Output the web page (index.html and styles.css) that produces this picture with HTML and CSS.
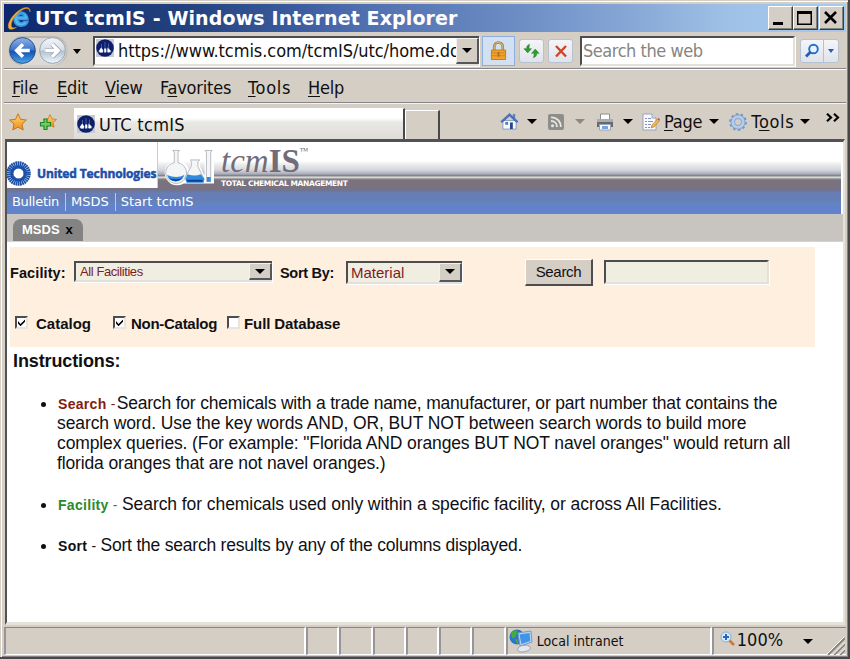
FILE: index.html
```html
<!DOCTYPE html>
<html lang="en">
<head>
<meta charset="utf-8">
<title>UTC tcmIS - Windows Internet Explorer</title>
<link rel="stylesheet" href="styles.css">
</head>
<body>
<svg width="0" height="0" class="defs">
  <defs>
    <linearGradient id="blueBall" x1="0" y1="0" x2="0" y2="1"><stop offset="0" stop-color="#8fb4e6"/><stop offset=".48" stop-color="#3c74cb"/><stop offset=".52" stop-color="#1450b0"/><stop offset="1" stop-color="#48a8f0"/></linearGradient>
    <linearGradient id="greyBall" x1="0" y1="0" x2="0" y2="1"><stop offset="0" stop-color="#f2f6fa"/><stop offset=".48" stop-color="#d5dde6"/><stop offset=".52" stop-color="#b4c1cf"/><stop offset="1" stop-color="#eef8ff"/></linearGradient>
    <linearGradient id="gold" x1="0" y1="0" x2="0" y2="1"><stop offset="0" stop-color="#ffd977"/><stop offset="1" stop-color="#ee8a14"/></linearGradient>
    <symbol id="favicon" viewBox="0 0 18 18"><rect width="18" height="18" fill="#c9cbd3"/><circle cx="9" cy="9" r="8.800" fill="#0c1f6c"/><path d="M5.500 5v4L2.600 13.200h4.200L9 9.500l2.400 3.700h3.800L12.500 9V4.500M9 3v6.500" fill="none" stroke="#5d6b9e" stroke-width=".8"/><path d="M5.200 8.500 2.800 12l1.400 1.400h2.600L7 11zM8.200 9.500h2v4h-2zM11.500 8.500l-.2 4.500 1.700.4 2-1.400z" fill="#fff"/></symbol>
    <symbol id="star" viewBox="0 0 18 18"><path d="M9 .8 11.500 6.300 17.400 7 13 11l1.200 6L9 14.100 3.800 17 5 11 .6 7l5.900-.7z" fill="url(#gold)" stroke="#c5761a"/></symbol>
  </defs>
</svg>
<div class="window">
  <header class="titlebar">
    <svg class="ie" viewBox="0 0 25 25"><path d="M21 14H11c0 3 4 4.500 6 2h4c-2 6-13 7-14-2C6.500 5 20 3 21 14zM11 11h6c-.5-3.500-5.500-3.500-6 0z" fill="#55b9f2" stroke="#3a97e0" stroke-width="1.600"/><path d="M23 6.500C24 1 18 0 10.500 6 3 12-1 21 2.500 23.500c2 1 5-.5 7-1.800-4 1.500-6 .3-5-4C6 11 14 3.500 19.500 3c2 0 3 1 3.500 3.500z" fill="#f5b030" stroke="#c98a28" stroke-width=".5"/></svg>
    <h1 class="title"><span class="t">UTC tcmIS - Windows Internet Explorer</span></h1>
    <div class="controls">
      <span class="ctl"><svg viewBox="0 0 22 20"><path d="M4 15h10v3H4z"/></svg></span>
      <span class="ctl"><svg viewBox="0 0 22 20"><path d="M3 4h15v14H3zM4.500 7v9.500h12V7z" fill-rule="evenodd"/></svg></span>
      <span class="ctl close"><svg viewBox="0 0 22 20"><path d="m5 5 11 11M16 5 5 16" stroke="#000" stroke-width="2.600"/></svg></span>
    </div>
  </header>

  <div class="navrow">
    <svg class="history" viewBox="0 0 62 32"><path d="M15 1h32c8 0 15 6 15 15s-7 15-15 15H15C7 31 1 24 1 16S7 1 15 1z" fill="#bbb7b0"/><path d="M15 3h32c7 0 14 5 14 13s-7 15-14 15H15z" fill="#dcdad5"/><circle cx="15.500" cy="16" r="13.300" fill="url(#blueBall)" stroke="#2b4f86"/><circle cx="46.500" cy="16" r="13.300" fill="url(#greyBall)" stroke="#96a3b2"/><path d="M23 16H10m6-6.500L9.500 16l6.500 6.500" fill="none" stroke="#fff" stroke-width="3.600"/><path d="M39 16h13m-6-6.500 6.500 6.500-6.500 6.500" fill="none" stroke="#8e9aa6" stroke-width="4.800"/><path d="M39 16h13m-6-6.500 6.500 6.500-6.500 6.500" fill="none" stroke="#fff" stroke-width="3.400"/></svg>
    <i class="arrow hist"></i>
    <div class="field address"><svg class="fav"><use href="#favicon"/></svg><span class="url"><span class="t">https://www.tcmis.com/tcmIS/utc/home.do</span></span><span class="drop"><i class="arrow"></i></span></div>
    <div class="lock"><svg viewBox="0 0 18 20"><path d="M4.500 10V5.500a4.500 4.500 0 0 1 9 0V10" fill="none" stroke="#9c7c45" stroke-width="2.800"/><path d="M4.500 10V5.500a4.500 4.500 0 0 1 9 0V10" fill="none" stroke="#e8c98a"/><path d="M1.500 9h15v10h-15z" fill="#f0a22c" stroke="#c77a1c"/><path d="M2 12h14M2 15h14" stroke="#cf8624"/><path d="M8 11h2v5H8z" fill="#b86a10"/></svg></div>
    <div class="btn refresh"><svg viewBox="0 0 18 16"><path d="M7 1C4.500 1.500 3.800 3 3.800 5.500H1L5 10l4-4.500H6.400C6.400 4 6.500 2.500 7 1zM11 15c2.500-.5 3.600-2 3.600-4.500H17L13 6 9 10.500h2.800c0 2-.2 3-.8 4.500z" fill="#2f9c2f" stroke="#1d7a20" stroke-width=".5"/></svg></div>
    <div class="btn stop"><svg viewBox="0 0 14 14"><path d="m2 2 10 10.500M12 2 2 12.500" stroke="#cf4526" stroke-width="2.400"/></svg></div>
    <div class="field searchbox"><span class="t">Search the web</span></div>
    <div class="btn find"><svg viewBox="0 0 16 16"><circle cx="9.500" cy="6" r="4.300" fill="#e9f4ff" stroke="#1e6fd0" stroke-width="1.900"/><path d="M6.500 9 2 13.500" stroke="#1e5fb8" stroke-width="2.800"/></svg><span><i class="arrow"></i></span></div>
  </div>

  <nav class="menubar">
    <span class="t"><u>F</u>ile</span><span class="t"><u>E</u>dit</span><span class="t"><u>V</u>iew</span><span class="t">F<u>a</u>vorites</span><span class="t wide"><u>T</u>ools</span><span class="t"><u>H</u>elp</span>
  </nav>

  <div class="tabrow">
    <svg class="star1"><use href="#star"/></svg>
    <svg class="star2" viewBox="0 0 18 18"><use href="#star" x="4" width="14" height="16"/><path d="M5 6h3v3.500h3.500V13H8v3.500H5V13H1.500V9.500H5z" fill="#6fce63" stroke="#1f8a22" stroke-width="1.200"/></svg>
    <div class="tab"><svg class="fav"><use href="#favicon"/></svg><span class="t">UTC tcmIS</span></div>
    <div class="newtab"></div>
    <div class="commands">
      <svg class="home" viewBox="0 0 20 20"><path d="M3 9h14v9H3z" fill="#f5f8fc" stroke="#8c9bb8"/><path d="M13.500 2h2.500v5h-2.500z" fill="#6484c0"/><path d="M.8 10 10 1.500 19 10l-1.500 1L10 4.300 2.200 11z" fill="#4a74c4" stroke="#2f549c" stroke-width=".6"/><path d="M10.500 11h3v7h-3z" fill="#24488f"/><path d="M5.500 10.500h3v3h-3z" fill="#5d7fae"/></svg>
      <i class="arrow a1"></i>
      <svg class="rss" viewBox="0 0 16 16"><rect width="16" height="16" rx="2" fill="#8d8d89"/><circle cx="4.500" cy="11.700" r="1.500" fill="#e8e6e1"/><path d="M3 7c3.500 0 6 2.500 6 6M3 3.300c6 0 9.800 4 9.800 9.700" fill="none" stroke="#e8e6e1" stroke-width="1.800"/></svg>
      <i class="arrow grey a2"></i>
      <svg class="printer" viewBox="0 0 18 18"><path d="M4.500 1h9v6h-9z" fill="#fff" stroke="#8c8c8c"/><path d="M1 6h16v8H1z" fill="#666a70"/><path d="M1 6h16v3H1z" fill="#a9adb3"/><path d="M3.500 11.500h11V17h-11z" fill="#f6f8ff" stroke="#9ba5b5"/><path d="M6 13h6v3H6z" fill="#78a3dd"/></svg>
      <i class="arrow a3"></i>
      <svg class="page" viewBox="0 0 18 18"><path d="M1 1h9l4 4v12H1z" fill="#f8faff" stroke="#9aa3b4"/><path d="M10 1v4h4" fill="#dde4ef" stroke="#9aa3b4"/><path d="M3 5.500h2m1 0h3M3 8.500h2m1 0h5M3 11.500h2m1 0h3M3 14.500h2m1 0h2" stroke="#8492b8"/><path d="m9 15 1-3 5.500-6 2 1.700L12 14z" fill="#f2b84c" stroke="#ad7533" stroke-width=".6"/><path d="m15.500 6 1-1 1.500 1.500-.8 1z" fill="#d34040"/></svg>
      <span class="t cmdPage"><u>P</u>age</span>
      <i class="arrow a4"></i>
      <svg class="gear" viewBox="0 0 18 18"><circle cx="9" cy="9" r="7.600" fill="none" stroke="#7898c4" stroke-width="2.600" stroke-dasharray="2.400 2.375"/><circle cx="9" cy="9" r="5.200" fill="none" stroke="#7898c4" stroke-width="4.400"/><circle cx="9" cy="9" r="5.200" fill="none" stroke="#b4cdec" stroke-width="3"/></svg>
      <span class="t wide cmdTools">T<u>o</u>ols</span>
      <i class="arrow a5"></i>
      <svg class="more" viewBox="0 0 14 9"><path d="m1 .8 4 3.700-4 3.700M8 .8l4 3.700-4 3.700" fill="none" stroke="#000" stroke-width="2.200"/></svg>
    </div>
  </div>

  <main class="viewport">
    <div class="banner">
      <div class="utc"><svg viewBox="0 0 26 26"><circle cx="13" cy="13" r="9" fill="none" stroke="#1c4fa8" stroke-width="7.500" stroke-dasharray="1.500 .38"/><circle cx="13" cy="13" r="7" fill="none" stroke="#1c4fa8" stroke-width="3"/></svg><span class="t">United Technologies</span></div>
      <div class="tcm">
        <svg class="flasks" viewBox="0 0 56 42"><g fill="#f7f8fa" stroke="#fff" stroke-width="4"><path d="M13 3h8l-2 2v11a11 11 0 1 1-4 0V5zM31 13h10l-2 2v5l8 16H26l7-16v-5zM47 3h8l-1 2v31h-6V5z"/></g><g fill="#f4f5f7" stroke="#b4b7bd"><path d="M12.500 3h7L18 5v11a11 11 0 1 1-4 0V5zM31 13h10l-2 2v5l6 12-2 4H27l-2-4 7-12v-5zM46.500 3h7.500l-1.500 2v31H48V5z"/></g><path d="M6.500 29q10 4 18 0c-2 9-16 9-18 0zM28 28q8 3 14 0l4 5-1 4H27l-1-4zM48.500 31h4v5h-4z" fill="#2f8bdc"/><path d="M8 32q8 3 15 0-7 7-15 0zM27 34h17v2H28z" fill="#0b3f98"/></svg>
        <div class="brand"><span class="name"><i class="t">tcm</i><b class="t">IS</b><sup>™</sup></span><span class="tagline t">TOTAL CHEMICAL MANAGEMENT</span></div>
      </div>
    </div>
    <nav class="links"><span class="t first">Bulletin</span><span class="t">MSDS</span><span class="t">Start tcmIS</span></nav>
    <div class="pagetabs"><div class="pagetab"><span class="t">MSDS</span><b class="x">x</b></div></div>
    <section class="form">
      <div class="filters">
        <label class="lf"><span class="t">Facility:</span></label>
        <div class="field sel s1"><span class="t">All Facilities</span><span class="drop"><i class="arrow"></i></span></div>
        <label class="ls"><span class="t">Sort By:</span></label>
        <div class="field sel s2"><span class="t">Material</span><span class="drop"><i class="arrow"></i></span></div>
        <div class="go"><span class="t">Search</span></div>
        <div class="field query"></div>
      </div>
      <div class="checks">
        <i class="box on"><svg viewBox="0 0 9 9"><path d="m1 3 2.500 3L8 1.500v2.200L3.500 8.200 1 5.500z"/></svg></i><label class="c1"><span class="t">Catalog</span></label>
        <i class="box on"><svg viewBox="0 0 9 9"><path d="m1 3 2.500 3L8 1.500v2.200L3.500 8.200 1 5.500z"/></svg></i><label class="c2"><span class="t">Non-Catalog</span></label>
        <i class="box"></i><label class="c3"><span class="t">Full Database</span></label>
      </div>
    </section>
    <h2 class="heading"><span class="t">Instructions:</span></h2>
    <ul class="help">
      <li><b class="red t">Search</b><span class="red dash"> -</span><span class="t l1">Search for chemicals with a trade name, manufacturer, or part number that contains the</span><br><span class="t l2">search word. Use the key words AND, OR, BUT NOT between search words to build more</span><br><span class="t l3">complex queries. (For example: "Florida AND oranges BUT NOT navel oranges" would return all</span><br><span class="t l4">florida oranges that are not navel oranges.)</span></li>
      <li><b class="green t">Facility</b><span class="green dash"> - </span><span class="t l5">Search for chemicals used only within a specific facility, or across All Facilities.</span></li>
      <li><b class="t sort">Sort</b><span class="dash"> - </span><span class="t l6">Sort the search results by any of the columns displayed.</span></li>
    </ul>
  </main>

  <footer class="status">
    <div class="cell c0"></div><div class="cell"></div><div class="cell"></div><div class="cell"></div><div class="cell"></div><div class="cell"></div><div class="cell"></div>
    <div class="cell zone"><svg viewBox="0 0 24 24"><circle cx="8" cy="8" r="7.500" fill="#2f74c8"/><path d="M2 4c4-4 7-3 6 0s-2 6-5 5zM6 10c4 0 4 3 2 5z" fill="#3fae3a"/><path d="m9 4 13-2 1 11-12 4z" fill="#b9d3f0" stroke="#7b97bd"/><path d="m10.500 5.500 10-1.500.8 8-9 3z" fill="#3e95ea"/><path d="M9 19c2-3 10-4 12-1s-5 5-8 5-5-1-4-4z" fill="#e4e8ee" stroke="#94a2b5"/></svg><span class="t">Local intranet</span></div>
    <div class="cell zoom"><svg viewBox="0 0 15 15"><path d="m9 9 5 5" stroke="#c77b3a" stroke-width="2.600"/><circle cx="6" cy="6" r="5" fill="#d7ebff" stroke="#8fa9c8"/><path d="M6 3v6M3 6h6" stroke="#2467c4" stroke-width="2"/></svg><span class="t">100%</span><i class="arrow"></i></div>
    <svg class="grip" viewBox="0 0 18 18"><path d="M1 18 18 1M7 18 18 7M13 18l5-5" stroke="#88857f" stroke-width="2"/><path d="M0 17 17 0M5.500 18 18 5.500M11.500 18l6.500-6.500" stroke="#fff"/></svg>
  </footer>
</div>
</body>
</html>
```

FILE: styles.css
```css
* { box-sizing: border-box; }
body { margin: 0; font-family: "DejaVu Sans Condensed", "DejaVu Sans", sans-serif; font-stretch: condensed; color: #101010; overflow: hidden; }
.defs { position: absolute; }
.t { white-space: nowrap; }
u { text-underline-offset: 2px; text-decoration-thickness: 1px; }
svg { display: block; flex: none; }
.window { width: 850px; height: 659px; background: #d5cec5; display: flex; flex-direction: column; padding: 4px 4px 3px; border: solid #47484b; border-width: 0 2px 2px 0; box-shadow: inset 1px 1px #d5cec5, inset 2px 2px #fff, inset -1px -1px #858280; }

.arrow { flex: none; width: 0; height: 0; border: 5px solid transparent; border-top-color: #000; border-bottom: 0; }
.arrow.grey { border-top-color: #8b8883; }

.titlebar { height: 28px; width: 842px; flex: none; display: flex; align-items: center; background: linear-gradient(90deg, #0d286d, #24427f 22%, #3c5c9f 35%, #4f6eae 42%, #6a8bc3 60%, #8aabd8 76%, #9fc1e6 86%, #a6caf0); }
.ie { width: 25px; height: 26px; margin-left: 3px; }
.title { margin: 0 0 0 3px; font: bold 19px/28px "DejaVu Sans", sans-serif; font-stretch: normal; color: #fff; flex: 1; letter-spacing: .12px; }
.controls { display: flex; margin-right: 2px; }
.ctl { width: 25px; height: 24px; background: #d5cec5; border: 1px solid; border-color: #fff #3c3c3c #3c3c3c #fff; box-shadow: inset -1px -1px #85817b; }
.ctl svg { width: 22px; height: 20px; }
.ctl.close { margin-left: 1px; }

.navrow { height: 38px; flex: none; display: flex; align-items: center; border-bottom: 1px solid #fff; box-shadow: inset 0 -1px #85858b; width: 842px; }
.history { width: 61px; height: 31px; margin-left: 3px; }
.arrow.hist { margin: 2px 0 0 5px; border-width: 5px 4.500px 0; }
.field { border: solid; border-width: 2px; border-color: #4b4d50 #e4dfd8 #e4dfd8 #4b4d50; background: #fff; display: flex; align-items: center; box-shadow: 1px 1px #fff; }
.address { margin: 0 0 0 12px; width: 386px; height: 30px; font-size: 18px; border-right: 0; }
.fav { width: 18px; height: 18px; }
.address .fav { margin: -6px 4px 0 1px; }
.url { flex: 1; overflow: hidden; min-width: 0; letter-spacing: -.06px; }
.drop { flex: none; background: #d5cec5; border: solid; border-width: 1px 2px 2px 1px; border-color: #f4f1ec #56575a #56575a #f4f1ec; display: flex; align-items: center; justify-content: center; }
.address .drop { width: 23px; height: 26px; }
.lock { width: 33px; height: 30px; margin-left: 3px; border: 1px solid #8aaede; background: #d3e0f2; display: grid; place-items: center; }
.lock svg { width: 17px; height: 20px; }
.btn { height: 24px; width: 25px; border: 1px solid #b7c2d1; border-radius: 3px; background: linear-gradient(#f4f5f8, #dfe3ea); display: grid; place-items: center; }
.refresh { margin-left: 4px; }
.refresh svg { width: 17px; height: 16px; }
.stop { margin-left: 4px; }
.stop svg { width: 14px; height: 14px; }
.searchbox { margin: 0 0 0 7px; width: 215px; height: 30px; font-size: 18px; letter-spacing: -.45px; color: #85857f; padding-left: 1px; }
.find { margin-left: 5px; width: 39px; display: flex; }
.find svg { width: 16px; height: 16px; margin: 0 3px; }
.find span { border-left: 1px solid #b7c2d1; align-self: stretch; display: flex; align-items: center; flex: 1; justify-content: center; }
.find .arrow { border-width: 4px 3px 0; border-top-color: #1e5fb8; }

.menubar { height: 34px; width: 842px; flex: none; display: grid; grid-template-columns: 45px 48px 55px 88px 60px auto; align-items: center; padding: 2px 0 0 8px; font-size: 18px; letter-spacing: -.2px; border-bottom: 1px solid #f6f2ee; box-shadow: inset 0 -1px #85858b; }
.wide { letter-spacing: .7px; }

.tabrow { height: 35px; flex: none; display: flex; font-size: 18px; }
.star1 { width: 18px; height: 18px; margin: 9px 0 0 5px; }
.star2 { width: 18px; height: 18px; margin: 9px 0 0 12px; }
.tab { width: 331px; margin: 4px 0 0 17px; border-right: 2px solid #47484b; background: linear-gradient(#fff 30%, #e9e8e4 45%, #dedcd6); border-top: 1px solid #fff; display: flex; align-items: center; padding-left: 3px; gap: 4px; letter-spacing: .3px; }
.newtab { width: 35px; margin: 6px 0 0 0; border: 1px solid #fff; border-right: 2px solid #47484b; border-bottom: 0; }
.commands { flex: 1; display: flex; align-items: center; }
.home { width: 19px; height: 19px; margin-left: 60px; }
.a1 { margin-left: 8px; }
.rss { width: 16px; height: 16px; margin-left: 11px; }
.a2 { margin-left: 11px; }
.printer { width: 18px; height: 18px; margin-left: 11px; }
.a3 { margin-left: 9px; }
.page { width: 18px; height: 18px; margin-left: 9px; }
.cmdPage { margin-left: 4px; letter-spacing: -.2px; }
.a4 { margin-left: 7px; }
.gear { width: 18px; height: 18px; margin-left: 10px; }
.cmdTools { margin-left: 4px; }
.a5 { margin-left: 6px; }
.more { width: 14px; height: 9px; margin: -9px 0 0 16px; }

.viewport { width: 840px; height: 486px; margin-left: 1px; flex: none; overflow: hidden; background: #fff; border: solid; border-width: 3px 2px 3px 2px; border-color: #505256 #e5e2dc #e5e2dc #505256; font-family: "Liberation Sans", Arial, sans-serif; font-stretch: normal; color: #101014; }
.banner { height: 48px; width: 834px; display: flex; background: linear-gradient(#fff 19px, #eeeeef 22px, #d5d6dc 28px, #a9adba 32px, #77757d 34px, #eee 35px, #8a8d87 37px, #7b7280 38px); }
.utc { width: 151px; height: 46px; background: #fff; border-right: 1px solid #c9ccd6; display: flex; align-items: center; color: #1c4fa8; font: bold 12px "Open Sans", sans-serif; overflow: hidden; }
.utc svg { width: 25px; height: 25px; margin: 16px 6px 0 -1px; }
.utc .t { margin-top: 16px; letter-spacing: -.12px; -webkit-text-stroke: .5px #1c4fa8; }
.tcm { display: flex; }
.flasks { width: 53px; height: 41px; margin: 5px 0 0 3px; }
.brand { margin-left: 7px; display: flex; flex-direction: column; font-family: "Liberation Serif", serif; color: #716c78; }
.name { font-size: 33px; line-height: 38px; height: 37px; white-space: nowrap; }
.name sup { font-size: 9px; vertical-align: 18px; line-height: 0; }
.tagline { font: bold 7.500px/9px "DejaVu Sans", sans-serif; color: #fff; letter-spacing: -.37px; }
.links { height: 24px; width: 834px; background: linear-gradient(#6e7391, #667db6 3px, #667db6 9px, #6384bd 13px, #6282cb 16px); display: flex; align-items: center; color: #fff; font: 13px "DejaVu Sans", sans-serif; padding-left: 5px; }
.links .t { line-height: 18px; padding-right: 6px; margin-right: 5px; border-right: 1px solid #b8c8ea; }
.links .first { letter-spacing: -.3px; }
.links .t:last-child { border: 0; }
.pagetabs { height: 28px; background: #c8c5c0; border-bottom: 1px solid #d6d2cc; padding: 5px 0 0 6px; }
.pagetab { height: 22px; width: 70px; background: #838383; border-radius: 8px 8px 0 0; color: #fff; font: bold 13px/21px "Liberation Sans", sans-serif; display: flex; padding-left: 9px; }
.pagetab .x { color: #000; margin-left: 6px; }
.form { margin: 5px 0 0 3px; width: 805px; height: 100px; background: #feefdf; font-weight: bold; font-size: 15px; }
.filters { display: grid; grid-template-columns: 64px 206px 66px 179px 79px 166px; height: 50px; align-items: center; }
.sel, .query { background: #f0eee0; }
.sel { color: #811a24; font-weight: normal; justify-content: space-between; padding-left: 4px; }
.s1 { width: 198px; height: 21px; font-size: 13px; letter-spacing: -.42px; margin-top: -1px; border-right: 0; }
.s2 { width: 116px; height: 23px; padding-left: 3px; border-right: 0; }
.s1 .drop { width: 23px; height: 17px; }
.s2 .drop { width: 23px; height: 19px; }
.lf, .ls { padding-top: 2px; font-size: 14.500px; }
.lf { letter-spacing: .1px; }
.ls { letter-spacing: -.3px; }
.go { width: 68px; height: 27px; background: #d5cec5; border: solid; border-width: 1px 2px 2px 1px; border-color: #fff #4b4d50 #4b4d50 #fff; font-weight: normal; display: grid; place-items: center; letter-spacing: -.3px; }
.query { width: 165px; height: 24px; }
.checks { display: flex; align-items: center; padding: 18px 0 0 5px; }
.box { width: 13px; height: 13px; border: 2px solid; border-color: #4b4d50 #e8e4de #e8e4de #4b4d50; background: #fff; margin-top: -3px; }
.box svg { width: 9px; height: 9px; }
.c1 { width: 77px; margin-left: 8px; }
.c2 { width: 96px; margin-left: 5px; letter-spacing: -.28px; }
.c3 { margin-left: 4px; letter-spacing: -.1px; }
.heading { margin: 4px 0 0 6px; font-size: 18px; line-height: 20px; letter-spacing: -.12px; }
.help { margin: 22px 0 0; padding: 0 0 0 50px; font-size: 17.500px; line-height: 20px; }
.help li { margin-bottom: 21px; }
.help b, .dash { font-size: 14px; line-height: 0; white-space: pre; letter-spacing: .3px; }
.help b { margin-left: 1px; }
.help li::marker { font-size: 15px; line-height: 0; }
.l1 { letter-spacing: -.19px; margin-left: 1px; }
.l2 { letter-spacing: -.1px; }
.l3 { letter-spacing: -.12px; }
.l4 { letter-spacing: -.14px; }
.l5 { letter-spacing: -.07px; }
.l6 { letter-spacing: -.22px; }
.red { color: #861c10; }
.green { color: #2c8a2c; }

.status { height: 28px; margin-top: 2px; width: 842px; display: flex; position: relative; flex: none; }
.cell { width: 33.300px; border: solid; border-width: 1px 2px 1px 2px; border-color: #85858b #fff #fff #97959a; flex: none; display: flex; align-items: center; }
.c0 { width: 302px; }
.zone { width: 206px; font-size: 14px; }
.zone svg { width: 24px; height: 24px; margin: 0 4px 0 1px; }
.zoom { flex: 1; font-size: 18px; border-right: 0; }
.zoom .t { line-height: 22px; margin-top: -2px; }
.zoom svg { width: 15px; height: 15px; margin: -6px 2px 0 6px; }
.zoom .arrow { margin-left: 20px; }
.grip { position: absolute; right: 1px; bottom: 0; width: 18px; height: 18px; }
```
